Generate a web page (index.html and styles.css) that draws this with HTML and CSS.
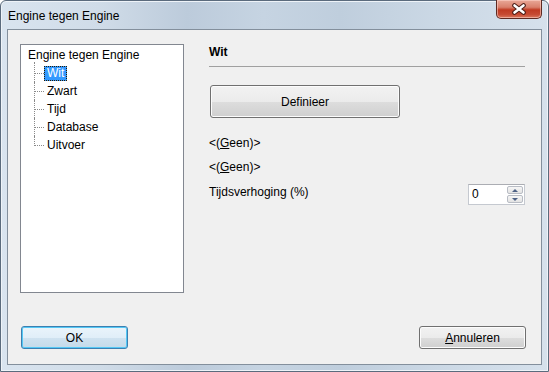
FILE: index.html
```html
<!DOCTYPE html>
<html>
<head>
    <meta charset="UTF-8">
    <title>Engine tegen Engine</title>
    <link rel="stylesheet" href="styles.css">
</head>
<body>
    <div class="window">
        <div class="titlebar">
            <span class="title">Engine tegen Engine</span>
            <div class="close-btn">
                <svg width="16" height="12" viewBox="0 0 16 12">
                    <path d="M3.5 2.5 L12.5 9.5 M12.5 2.5 L3.5 9.5" stroke="#4a1c16" stroke-width="4.6" stroke-linecap="round"/>
                    <path d="M3.5 2.5 L12.5 9.5 M12.5 2.5 L3.5 9.5" stroke="#fff" stroke-width="2.6" stroke-linecap="round"/>
                </svg>
            </div>
        </div>

        <div class="client">
            <div class="top-row">
                <!-- Tree with the settings pages -->
                <div class="tree">
                    <div class="tree-root">Engine tegen Engine</div>
                    <ul class="tree-children">
                        <li><span class="node selected">Wit</span></li>
                        <li><span class="node">Zwart</span></li>
                        <li><span class="node">Tijd</span></li>
                        <li><span class="node">Database</span></li>
                        <li><span class="node">Uitvoer</span></li>
                    </ul>
                </div>

                <!-- Page for the selected node -->
                <div class="panel">
                    <div class="panel-header">Wit</div>
                    <button class="btn btn-define">Definieer</button>
                    <div class="label first">&lt;(<u>G</u>een)&gt;</div>
                    <div class="label">&lt;(<u>G</u>een)&gt;</div>
                    <div class="field-row">
                        <span class="label-inline">Tijdsverhoging (%)</span>
                        <div class="spin">
                            <span class="spin-value">0</span>
                            <div class="spin-buttons">
                                <div class="spin-btn"><span class="arrow up"></span></div>
                                <div class="spin-btn"><span class="arrow down"></span></div>
                            </div>
                        </div>
                    </div>
                </div>
            </div>

            <div class="bottom-row">
                <button class="btn btn-default">OK</button>
                <button class="btn btn-cancel"><u>A</u>nnuleren</button>
            </div>
        </div>
    </div>
</body>
</html>
```

FILE: styles.css
```css
body {
    margin: 0;
    font-family: "Liberation Sans", Arial, sans-serif;
    font-size: 12px;
    color: #000;
    background: #fff;
}
.window {
    width: 549px;
    height: 372px;
    box-sizing: border-box;
    border: 1px solid #5b6b7d;
    border-radius: 6px 6px 0 0;
    background: linear-gradient(90deg, #d9e4ef 0%, #d0dce8 18%, #bccbdb 34%, #c6d4e2 48%, #bfcedd 62%, #cbd8e5 80%, #d6e1ec 100%);
    display: flex;
    flex-direction: column;
    box-shadow: inset 0 0 0 1px #eef3f8;
}
.titlebar {
    height: 28px;
    display: flex;
    justify-content: space-between;
    align-items: flex-start;
    padding: 0 6px 0 7px;
}
.title {
    margin-top: 7px;
    line-height: 16px;
    color: #000;
}
.close-btn {
    margin-top: -1px;
    width: 44px;
    height: 18px;
    border: 1px solid #5e2a22;
    border-top: none;
    border-radius: 0 0 5px 5px;
    background: linear-gradient(#e9a898 0%, #d9806c 40%, #c03a22 55%, #c64a32 80%, #d9775e 100%);
    box-shadow: inset 0 0 0 1px rgba(255, 215, 205, 0.55);
    display: flex;
    align-items: center;
    justify-content: center;
}
.client {
    flex: 1;
    margin: 0 6px 6px 6px;
    border: 1px solid #838f9c;
    background: #f0f0f0;
    display: flex;
    flex-direction: column;
    padding: 14px 15px 15px 12px;
}
.top-row {
    display: flex;
}
.tree {
    width: 164px;
    height: 249px;
    box-sizing: border-box;
    border: 1px solid #828790;
    background: #fff;
    padding: 1px 0 0 7px;
}
.tree-root {
    line-height: 18px;
}
.tree-children {
    list-style: none;
    margin: 0 0 0 6px;
    padding: 0;
}
.tree-children li {
    position: relative;
    height: 18px;
    padding-left: 10px;
    display: flex;
    align-items: center;
}
.tree-children li::before {
    content: "";
    position: absolute;
    left: 0;
    top: 0;
    height: 18px;
    border-left: 1px dotted #8a8a8a;
}
.tree-children li:first-child::before {
    top: -2px;
    height: 20px;
}
.tree-children li:last-child::before {
    height: 10px;
}
.tree-children li::after {
    content: "";
    position: absolute;
    left: 1px;
    top: 9px;
    width: 9px;
    border-top: 1px dotted #8a8a8a;
}
.node {
    line-height: 13px;
    padding: 0 2px;
    border: 1px solid transparent;
}
.node.selected {
    background: #3399ff;
    color: #fff;
    border: 1px dotted #2a1a00;
}
.panel {
    flex: 1;
    margin-left: 25px;
    margin-right: 1px;
    display: flex;
    flex-direction: column;
    align-items: flex-start;
}
.panel-header {
    align-self: stretch;
    font-weight: bold;
    line-height: 16px;
    padding-bottom: 6px;
    border-bottom: 1px solid #a0a0a0;
}
.btn {
    font-family: "Liberation Sans", Arial, sans-serif;
    font-size: 12px;
    color: #000;
    border: 1px solid #707070;
    border-radius: 3px;
    background: linear-gradient(#f2f2f2 0%, #ebebeb 50%, #dddddd 51%, #cfcfcf 100%);
    box-shadow: inset 0 0 0 1px #fcfcfc;
    padding: 0;
}
.btn-define {
    width: 190px;
    height: 33px;
    margin: 18px 0 0 1px;
}
.label {
    line-height: 16px;
    margin-top: 8px;
}
.label.first {
    margin-top: 17px;
}
.field-row {
    align-self: stretch;
    display: flex;
    justify-content: space-between;
    align-items: flex-start;
    margin-top: 9px;
}
.label-inline {
    line-height: 16px;
}
.spin {
    width: 57px;
    height: 21px;
    box-sizing: border-box;
    border: 1px solid #c5c9d0;
    border-top-color: #abadb3;
    background: #fff;
    display: flex;
}
.spin-value {
    flex: 1;
    padding-left: 3px;
    line-height: 18px;
}
.spin-buttons {
    width: 16px;
    display: flex;
    flex-direction: column;
    gap: 1px;
    padding: 1px 1px 1px 0;
}
.spin-btn {
    flex: 1;
    border: 1px solid #b8bcc4;
    border-radius: 2px;
    background: linear-gradient(#f6f6f6, #e3e3e3);
    display: flex;
    align-items: center;
    justify-content: center;
}
.arrow {
    width: 0;
    height: 0;
    border-left: 3px solid transparent;
    border-right: 3px solid transparent;
}
.arrow.up {
    border-bottom: 3px solid #4d6185;
}
.arrow.down {
    border-top: 3px solid #4d6185;
}
.bottom-row {
    margin-top: auto;
    display: flex;
    justify-content: space-between;
}
.btn-default {
    width: 107px;
    height: 23px;
    margin-left: 1px;
    border-color: #3c7fb1;
    background: linear-gradient(#eaf4fb 0%, #e0eef8 50%, #cfe2f0 51%, #c4dae9 100%);
    box-shadow: inset 0 0 0 1px #54c8f5;
}
.btn-cancel {
    width: 107px;
    height: 23px;
}
```
